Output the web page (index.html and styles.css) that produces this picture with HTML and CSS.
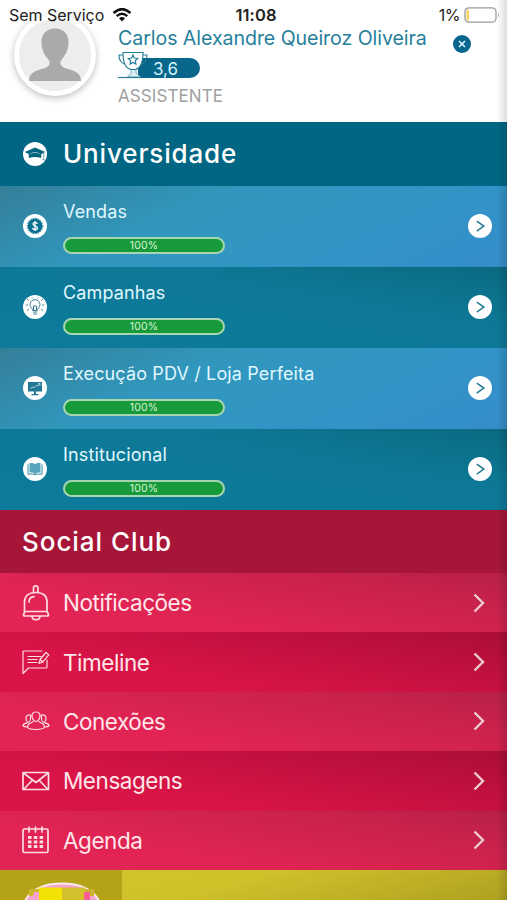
FILE: index.html
```html
<!DOCTYPE html>
<html lang="pt-BR">
<head>
<meta charset="utf-8">
<title>Menu</title>
<link rel="stylesheet" href="styles.css">
</head>
<body>
<div class="screen">
  <div class="statusbar">
    <div class="carrier"><span>Sem Serviço</span>
      <svg width="20" height="14" viewBox="0 0 20 14"><path d="M1.500 5Q10-2.800 18.500 5" fill="none" stroke="#111" stroke-width="2.500"/><path d="M4.700 8.100Q10 3.400 15.300 8.100" fill="none" stroke="#111" stroke-width="2.400"/><path d="M7 10.300Q10 7.600 13 10.300L10 13.500Z" fill="#111"/></svg>
    </div>
    <strong class="clock">11:08</strong>
    <div class="power"><span>1%</span>
      <svg width="36" height="16" viewBox="0 0 36 16"><rect x="1" y=".8" width="31" height="14.400" rx="4" fill="#fff" stroke="#9a9a9a" stroke-width="1.300"/><path d="M5 2.500Q2.500 2.500 2.500 5v6q0 2.500 2.500 2.500Z" fill="#fbd45e"/><path d="M34 5.500q1.800 2.500 0 5Z" fill="#999"/></svg>
    </div>
  </div>
  <header class="profile">
    <div class="avatar"><svg width="54" height="54" viewBox="0 0 54 54"><path d="M27 .5C18.500.5 13.500 6 13.500 14c0 8 3 13 6.500 17 3 4 2 7-3 9C8 43 1 44 1 53h52c0-9-7-10-16-13-5-2-6-5-3-9 3.500-4 6.500-9 6.500-17C40.500 6 35.500.5 27 .5Z" fill="#aaa"/></svg></div>
    <div class="person">
      <div class="name">Carlos Alexandre Queiroz Oliveira</div>
      <div class="score">
        <svg class="trophy" width="30" height="28" viewBox="0 0 30 28"><path d="M13 18v4l-3.500 4h13L18 22v-4Z" fill="#d9edf2" stroke="#79b1c1"/><path d="M5 1.500h20c0 10-3 16-8 17h-4C8 17.500 5 11.500 5 1.500Z" fill="#fff" stroke="#267d98" stroke-width="1.100"/><path d="M5 4H1c0 6 2 8 6 9M25 4h4c0 6-2 8-6 9" fill="none" stroke="#267d98" stroke-width="1.100"/><path d="m15 4 1.400 3 3.300.5-2.400 2.300.6 3.200-2.900-1.600-2.900 1.600.6-3.200-2.400-2.300 3.300-.5Z" fill="#fff" stroke="#267d98" stroke-width="1.200"/><path d="M0 26.500h23" stroke="#267d98" stroke-width="1.200"/></svg>
        <span class="score-value">3,6</span>
      </div>
      <div class="role">ASSISTENTE</div>
    </div>
    <svg class="close" width="18" height="18" viewBox="0 0 18 18"><circle cx="9" cy="9" r="9" fill="#07658e"/><path d="m6 6 6 6m0-6-6 6" stroke="#d9f3fb" stroke-width="1.700"/></svg>
  </header>

  <section class="university">
    <h2 class="heading uni-heading">
      <svg width="24" height="24" viewBox="0 0 24 24"><circle cx="12" cy="12" r="12" fill="#fff"/><path d="M1.800 10 12 5.500 22.200 10 18 12.200Q12 8.500 6 12.200Z" fill="#046581"/><path d="M5.500 12.600Q12 8.800 18.500 12.600L18 16Q12 14 6 16Z" fill="#046581"/><path d="M20.800 10.500v5l-1 2.300h2" fill="none" stroke="#4c8c9e" stroke-width=".8"/></svg>
      <span>Universidade</span>
    </h2>
    <div class="course light">
      <svg class="course-icon" width="24" height="24" viewBox="0 0 24 24"><circle cx="12" cy="12" r="12" fill="#fff"/><circle cx="12" cy="12" r="7.300" fill="#087093"/><circle cx="12" cy="12" r="7.700" fill="none" stroke="#087093" stroke-width="1" stroke-dasharray="1.600 1"/><path d="M14.300 9.800C13.800 7.800 10 8 10 10c0 2.300 4.400 1.500 4.400 4 0 2.200-4.300 2.400-4.800 0M12 7v10" fill="none" stroke="#fff" stroke-width="1.300"/></svg>
      <div class="course-body"><span>Vendas</span><div class="bar">100%</div></div>
      <svg class="go" width="24" height="24" viewBox="0 0 24 24"><circle cx="12" cy="12" r="12" fill="#fff"/><path d="m8.800 7.100 7 5-7 5" fill="none" stroke="#267f98" stroke-width="1.600"/></svg>
    </div>
    <div class="course dark">
      <svg class="course-icon" width="24" height="24" viewBox="0 0 24 24"><circle cx="12" cy="12" r="12" fill="#fff"/><g fill="none" stroke="#397f91" stroke-width="1"><path d="M9.800 15.500c0-2-2.800-3-2.800-5.800a5 5 0 0 1 10 0c0 2.800-2.800 3.800-2.800 5.800ZM10.500 15v-4h3v4M9.800 17h4.400M10.200 19h3.600M4 4l1.800 1.500M20 4l-1.800 1.500M2.800 10H5M19 10h2.200M4 15.500 5.900 14M20 15.500 18.100 14M9 2.500l.3 1M15 2.500l-.3 1"/></g></svg>
      <div class="course-body"><span>Campanhas</span><div class="bar">100%</div></div>
      <svg class="go" width="24" height="24" viewBox="0 0 24 24"><circle cx="12" cy="12" r="12" fill="#fff"/><path d="m8.800 7.100 7 5-7 5" fill="none" stroke="#267f98" stroke-width="1.600"/></svg>
    </div>
    <div class="course light">
      <svg class="course-icon" width="24" height="24" viewBox="0 0 24 24"><circle cx="12" cy="12" r="12" fill="#fff"/><path d="M5 6h14v9.500H5ZM11 15.500h2V18h2.500v1.200h-7V18H11Z" fill="#217894"/><path d="m7.500 12.500 2-1.500 1.500.8 2.500-2.500 1.400.7 2-2.300M15 7.600h2v2" fill="none" stroke="#bae3ee" stroke-width=".9"/></svg>
      <div class="course-body"><span>Execução PDV / Loja Perfeita</span><div class="bar">100%</div></div>
      <svg class="go" width="24" height="24" viewBox="0 0 24 24"><circle cx="12" cy="12" r="12" fill="#fff"/><path d="m8.800 7.100 7 5-7 5" fill="none" stroke="#267f98" stroke-width="1.600"/></svg>
    </div>
    <div class="course dark">
      <svg class="course-icon" width="24" height="24" viewBox="0 0 24 24"><circle cx="12" cy="12" r="12" fill="#fff"/><path d="M6.500 6q4-.5 5.200 1v9.500q-2-1.500-5.200-1ZM17.500 6q-4-.5-5.200 1v9.500q2-1.500 5.200-1Z" fill="#54a5bd"/><path d="M5 7.300v9.900q5-.7 7 .5 2-1.200 7-.5V7.300M12 7v10" fill="none" stroke="#318ba6"/></svg>
      <div class="course-body"><span>Institucional</span><div class="bar">100%</div></div>
      <svg class="go" width="24" height="24" viewBox="0 0 24 24"><circle cx="12" cy="12" r="12" fill="#fff"/><path d="m8.800 7.100 7 5-7 5" fill="none" stroke="#267f98" stroke-width="1.600"/></svg>
    </div>
  </section>

  <section class="social">
    <h2 class="heading social-heading"><span>Social Club</span></h2>
    <div class="item bright">
      <svg class="item-icon" width="28" height="36" viewBox="0 0 28 36"><path d="M11.500 7V3C11.500.2 16 .2 16 3v4M2.500 26.500V17C2.500 10 8 7.500 14 7.500S25 10 25 17v9.500M3 26.500h22l1.300 2.500q.8 2-1.300 2H3q-2.100 0-1.300-2ZM10 31c0 5 8 5 8 0M7 17q0-4.800 5-5.300"/></svg>
      <span>Notificações</span>
      <svg class="arrow" width="12" height="20" viewBox="0 0 12 20"><path d="m1.500 1.500 8.500 8.500-8.500 8.500"/></svg>
    </div>
    <div class="item deep">
      <svg class="item-icon thin" width="28" height="26" viewBox="0 0 28 26"><path d="M20 2H2q-1 0-1 1v21.500L6.500 19H24q1 0 1-1v-7M6 7.500h13M6 10.500h9M6 13.500h9M17 14.500l1-4 6-7 2.800 2.400-6 7ZM18 10.500l3 2.500"/></svg>
      <span>Timeline</span>
      <svg class="arrow" width="12" height="20" viewBox="0 0 12 20"><path d="m1.500 1.500 8.500 8.500-8.500 8.500"/></svg>
    </div>
    <div class="item bright">
      <svg class="item-icon thin" width="28" height="20" viewBox="0 0 28 20"><path d="M14 1c-3 0-4 1.500-4 4s2 5.500 4 5.500 4-3 4-5.500-1-4-4-4ZM11 10.500c-1 1.500-5 1.500-5.500 5 0 4 17 4 17 0C22 12 18 12 17 10.500M8.500 4C5 3.500 4 5 4 7.500c0 2 1 3.500 2 4-2 1-5 .7-5 3.500q2 1.200 4.500.8M8.500 4v4q-.5 2.500-2 3.500M19.500 4C23 3.500 24 5 24 7.500c0 2-1 3.500-2 4 2 1 5 .7 5 3.500q-2 1.200-4.500.8M19.500 4v4q.5 2.500 2 3.500"/></svg>
      <span>Conexões</span>
      <svg class="arrow" width="12" height="20" viewBox="0 0 12 20"><path d="m1.500 1.500 8.500 8.500-8.500 8.500"/></svg>
    </div>
    <div class="item deep">
      <svg class="item-icon" width="28" height="20" viewBox="0 0 28 20"><path d="M1 1.500h25.500v17H1ZM1.500 2 14 11.500 26 2M2 18l8.500-9M25.500 18l-8.500-9"/></svg>
      <span>Mensagens</span>
      <svg class="arrow" width="12" height="20" viewBox="0 0 12 20"><path d="m1.500 1.500 8.500 8.500-8.500 8.500"/></svg>
    </div>
    <div class="item bright">
      <svg class="item-icon" width="28" height="28" viewBox="0 0 28 28"><rect x="1" y="3" width="25" height="23.500" rx="1.500"/><path d="M7 1v5M13.500 1v5M20 1v5"/><path class="days" d="M6 11.500H21.500M6 16H21.500M6 20.500H21.500"/></svg>
      <span>Agenda</span>
      <svg class="arrow" width="12" height="20" viewBox="0 0 12 20"><path d="m1.500 1.500 8.500 8.500-8.500 8.500"/></svg>
    </div>
  </section>

  <section class="game">
    <div class="game-icon"><svg width="76" height="18" viewBox="0 0 76 18"><path d="M1 19Q10 1.500 38 1.500T75 19Z" fill="#f3a5cf" stroke="#f9e8ee" stroke-width="2"/><path d="M5 7h11v7H5ZM61 7h9v7h-9Z" fill="#cbb52b"/><path d="M15 5.500h23V18H15Z" fill="#f2e205"/><path d="M38 5.500h23V18H38Z" fill="#d4bf2d"/><path d="M10 10h5v8H8Z" fill="#f6a4cf"/><path d="M60 10h6v8h-6Z" fill="#fa5d91"/></svg></div>
  </section>
  <div class="edge"></div>
</div>
</body>
</html>
```

FILE: styles.css
```css
* { box-sizing: border-box; }
body { margin: 0; font-family: Inter, "Liberation Sans", sans-serif; }
svg { display: block; flex: none; }
.screen { position: relative; width: 507px; height: 900px; overflow: hidden; background: #fff; display: flex; flex-direction: column; }
.statusbar { position: absolute; z-index: 2; top: 5px; left: 9px; right: 7px; height: 20px; display: grid; grid-template-columns: 1fr auto 1fr; align-items: center; color: #222; font-size: 16px; line-height: 20px; white-space: nowrap; }
.carrier, .power { display: flex; align-items: center; }
.carrier { gap: 8px; letter-spacing: -.03px; }
.clock { font-weight: 600; font-size: 16.5px; letter-spacing: .1px; margin-left: 3px; }
.power { justify-content: flex-end; gap: 4px; letter-spacing: -.5px; }
.profile { height: 122px; flex: none; display: flex; align-items: flex-start; padding: 14px 36px 0 14px; }
.avatar { width: 82px; height: 82px; flex: none; border-radius: 50%; border: 5px solid #fff; background: #ededed; box-shadow: 0 2px 7px #0004; display: flex; justify-content: center; padding-top: 9px; }
.person { margin: 12px 0 0 22px; white-space: nowrap; width: 330px; }
.name { color: #277f9c; font-size: 19.6px; letter-spacing: -.07px; line-height: 24px; height: 25px; }
.score { height: 28px; display: flex; align-items: flex-end; }
.trophy { position: relative; z-index: 1; }
.score-value { background: #07668a; color: #d5f3fc; width: 62px; height: 20px; border-radius: 3px 10px 10px 3px; margin-left: -10px; padding-left: 15px; font-size: 17px; line-height: 22px; margin-bottom: 1px; }
.role { color: #a0a0a0; font-size: 17px; letter-spacing: .08px; line-height: 20px; margin-top: 7px; }
.close { margin: 21px 0 0 5px; }
.heading { margin: 0; height: 63.500px; display: flex; align-items: center; color: #fff; font-size: 26px; font-weight: 500; white-space: nowrap; }
.uni-heading { background: #006683; padding-left: 23px; gap: 16px; letter-spacing: .85px; }
.course { height: 81px; padding: 0 15px 0 23px; display: flex; align-items: center; color: #e0f8ff; }
.course.light { background: linear-gradient(155deg, #347f98 0%, #3197bd 35%, #3195c5 65%, #368dca 100%); }
.course.dark { background: linear-gradient(190deg, #0a6a80 0%, #0d7896 35%, #0e7b9c 100%); }
.course-body { margin-left: 16px; flex: 1; font-size: 18px; line-height: 24px; letter-spacing: .14px; height: 81px; padding-top: 14px; white-space: nowrap; }
.bar { width: 162px; height: 17px; margin-top: 13px; border: 2px solid #a6d6b0; border-radius: 9px; background: #179b3a; color: #dcf2d6; font-size: 10.5px; line-height: 13px; text-align: center; letter-spacing: .2px; }
.social-heading { padding-left: 22px; background: #a71638; letter-spacing: .95px; }
.item { height: 59.400px; display: flex; align-items: center; padding: 0 22px; color: #ffe6e9; font-size: 22.5px; letter-spacing: -.45px; white-space: nowrap; }
.item span { margin-left: 13px; flex: 1; }
.bright { background: linear-gradient(190deg, #b72046 0%, #c9224b 25%, #e22454 70%); }
.deep { background: linear-gradient(190deg, #a90f35 0%, #bd103c 25%, #d91447 70%); }
.item-icon { fill: none; stroke: #ffdce3; stroke-width: 1.700; stroke-linejoin: round; stroke-linecap: round; }
.thin { stroke-width: 1.200; }
.item-icon .days { stroke-width: 3.200; stroke-dasharray: 3.500 2.300; stroke-linecap: butt; }
.arrow { fill: none; stroke: #edccd3; stroke-width: 2.400; }
.game { height: 31px; display: flex; background: linear-gradient(165deg, #d2c52c 0%, #cfc12a 45%, #afa021 100%); }
.game-icon { width: 122px; background: #b4a319; padding: 12px 0 0 24px; }
.edge { position: absolute; z-index: 3; top: 0; right: 0; width: 10px; height: 900px; background: linear-gradient(90deg, #0000, #00000022); }
```
